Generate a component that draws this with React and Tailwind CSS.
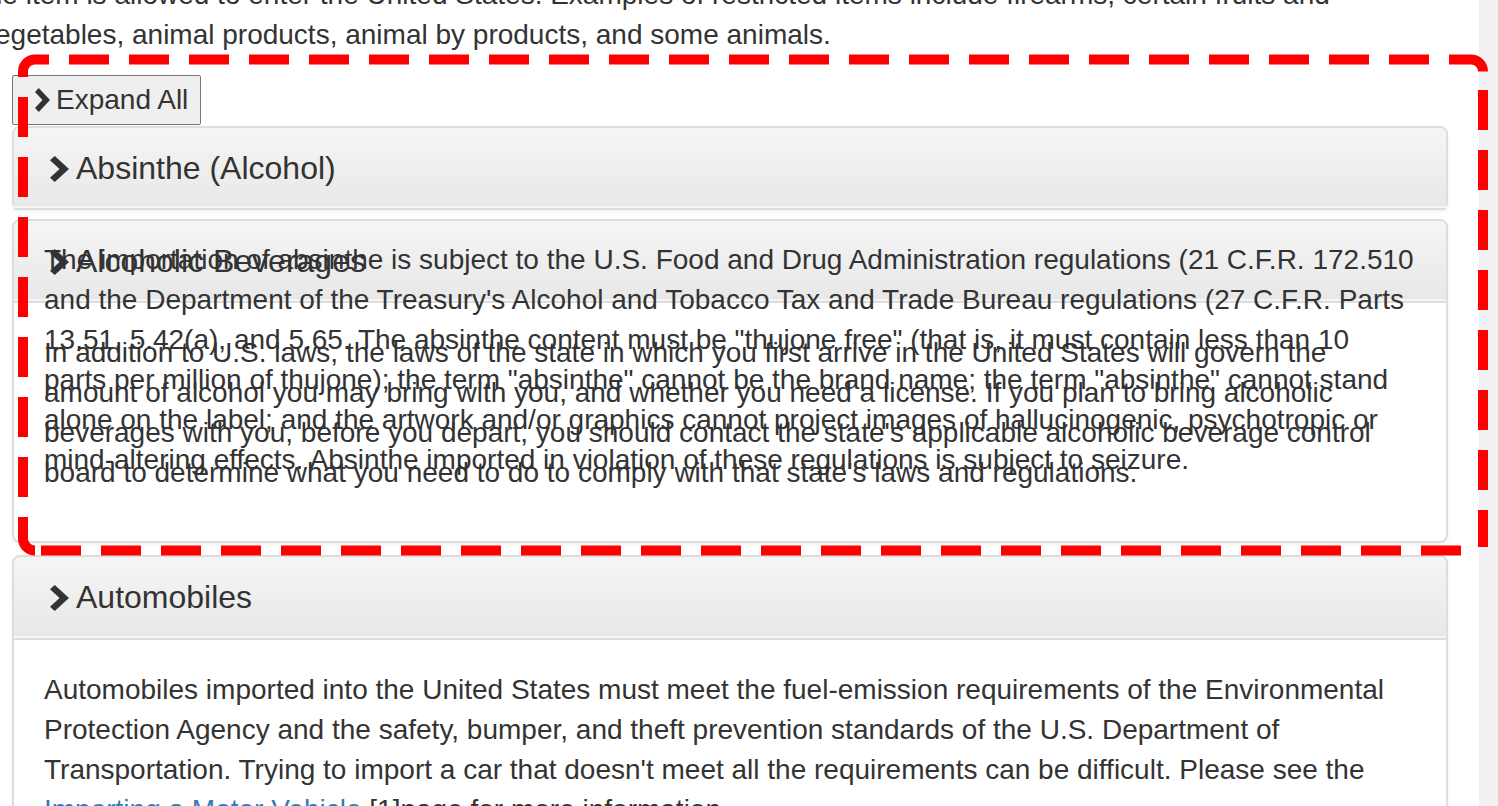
import React from "react";

const Chevron = ({ className }) => (
  <svg viewBox="0 0 16 24" preserveAspectRatio="none" className={className} aria-hidden="true">
    <polygon points="0,4 4,0 16,12 4,24 0,20 8,12" fill="#333" />
  </svg>
);

const Panel = ({ title, open = true, className = "", children }) => (
  <div className={`rounded-[8px] border-2 border-[#ddd] bg-white shadow-[0_2px_4px_rgba(0,0,0,0.05)] ${className}`}>
    <div className="rounded-t-[6px] border-b-2 border-transparent bg-linear-to-b from-[#f5f5f5] to-[#e8e8e8] px-[30px] pt-[23px] pb-[20px]">
      <h4 className="flex items-center text-[32px] leading-[1.1]">
        <Chevron className="ml-[6px] mr-[7px] h-[26px] w-[19px] shrink-0" />
        {title}
      </h4>
    </div>
    <div className={open ? "" : "h-0"}>
      <div className="border-t-2 border-[#ddd] p-[30px]">
        <p className="mb-[18px]">{children}</p>
      </div>
    </div>
  </div>
);

// dash starts along each side of the red frame, 40 on / 20 off
const dashes = (start, count) => Array.from({ length: count }, (_, i) => start + i * 60);

const DashedFrame = () => (
  <svg className="pointer-events-none absolute inset-0 h-full w-full" viewBox="0 0 1498 806">
    <g stroke="#ff0000" strokeWidth="10" fill="none">
      {dashes(69, 23).map((x) => (
        <line key={`t${x}`} x1={x} y1="59.5" x2={x + 40} y2="59.5" />
      ))}
      {dashes(90, 8).map((y) => (
        <line key={`r${y}`} x1="1483" y1={y} x2="1483" y2={Math.min(y + 40, 547)} />
      ))}
      {dashes(41, 24).map((x) => (
        <line key={`b${x}`} x1={x} y1="550.5" x2={x + 40} y2="550.5" />
      ))}
      {dashes(97, 7).map((y) => (
        <line key={`l${y}`} x1="23" y1={y} x2="23" y2={y + 40} />
      ))}
      <path d="M23 77 L23 71.5 A12 12 0 0 1 35 59.5 L49 59.5" />
      <path d="M1449 59.5 L1471 59.5 A12 12 0 0 1 1483 71.5" />
      <path d="M23 517 L23 538.5 A12 12 0 0 0 35 550.5" />
    </g>
  </svg>
);

export default function App() {
  return (
    <div className="relative h-[806px] w-[1498px] overflow-hidden bg-white font-['Liberation_Sans',Arial,sans-serif] text-[28px] leading-[40px] text-[#333]">
      <div className="flex h-full">
        <div className="w-[1479px] shrink-0">
          <div className="mt-[-25px]">
            <div className="mb-[20px] whitespace-nowrap">
              <div className="ml-[-21px]">
                the item is allowed to enter the United States. Examples of restricted items include firearms, certain fruits and
              </div>
              <div className="ml-[-19px]">
                vegetables, animal products, animal by products, and some animals.
              </div>
            </div>

            <div className="ml-[12px] w-[1436px]">
              <button className="mt-px flex items-center rounded-[2px] border border-[#767676] bg-[#efefef] px-[12px] py-[4px] text-[28px] leading-[40px] text-[#333]">
                <Chevron className="ml-[10px] mr-[6px] h-[24px] w-[15px]" />
                Expand All
              </button>

              <Panel title="Absinthe (Alcohol)" open={false} className="mt-px">
                The importation of absinthe is subject to the U.S. Food and Drug Administration regulations (21 C.F.R. 172.510 and the Department of the Treasury's Alcohol and Tobacco Tax and Trade Bureau regulations (27 C.F.R. Parts 13.51, 5.42(a), and 5.65. The absinthe content must be "thujone free" (that is, it must contain less than 10 parts per million of thujone); the term "absinthe" cannot be the brand name; the term "absinthe" cannot stand alone on the label; and the artwork and/or graphics cannot project images of hallucinogenic, psychotropic or mind-altering effects. Absinthe imported in violation of these regulations is subject to seizure.
              </Panel>

              <Panel title="Alcoholic Beverages" className="mt-[9px]">
                In addition to U.S. laws, the laws of the state in which you first arrive in the United States will govern the amount of alcohol you may bring with you, and whether you need a license. If you plan to bring alcoholic beverages with you, before you depart, you should contact the state's applicable alcoholic beverage control board to determine what you need to do to comply with that state's laws and regulations.
              </Panel>

              <Panel title="Automobiles" className="mt-[12px]">
                Automobiles imported into the United States must meet the fuel-emission requirements of the Environmental Protection Agency and the safety, bumper, and theft prevention standards of the U.S. Department of Transportation. Trying to import a car that doesn't meet all the requirements can be difficult. Please see the{" "}
                <a href="#" className="text-[#337ab7]">Importing a Motor Vehicle</a> [1]page for more information.
              </Panel>
            </div>
          </div>
        </div>
        <div className="w-[19px] shrink-0 bg-[#f1f1f1]" />
      </div>
      <DashedFrame />
    </div>
  );
}
